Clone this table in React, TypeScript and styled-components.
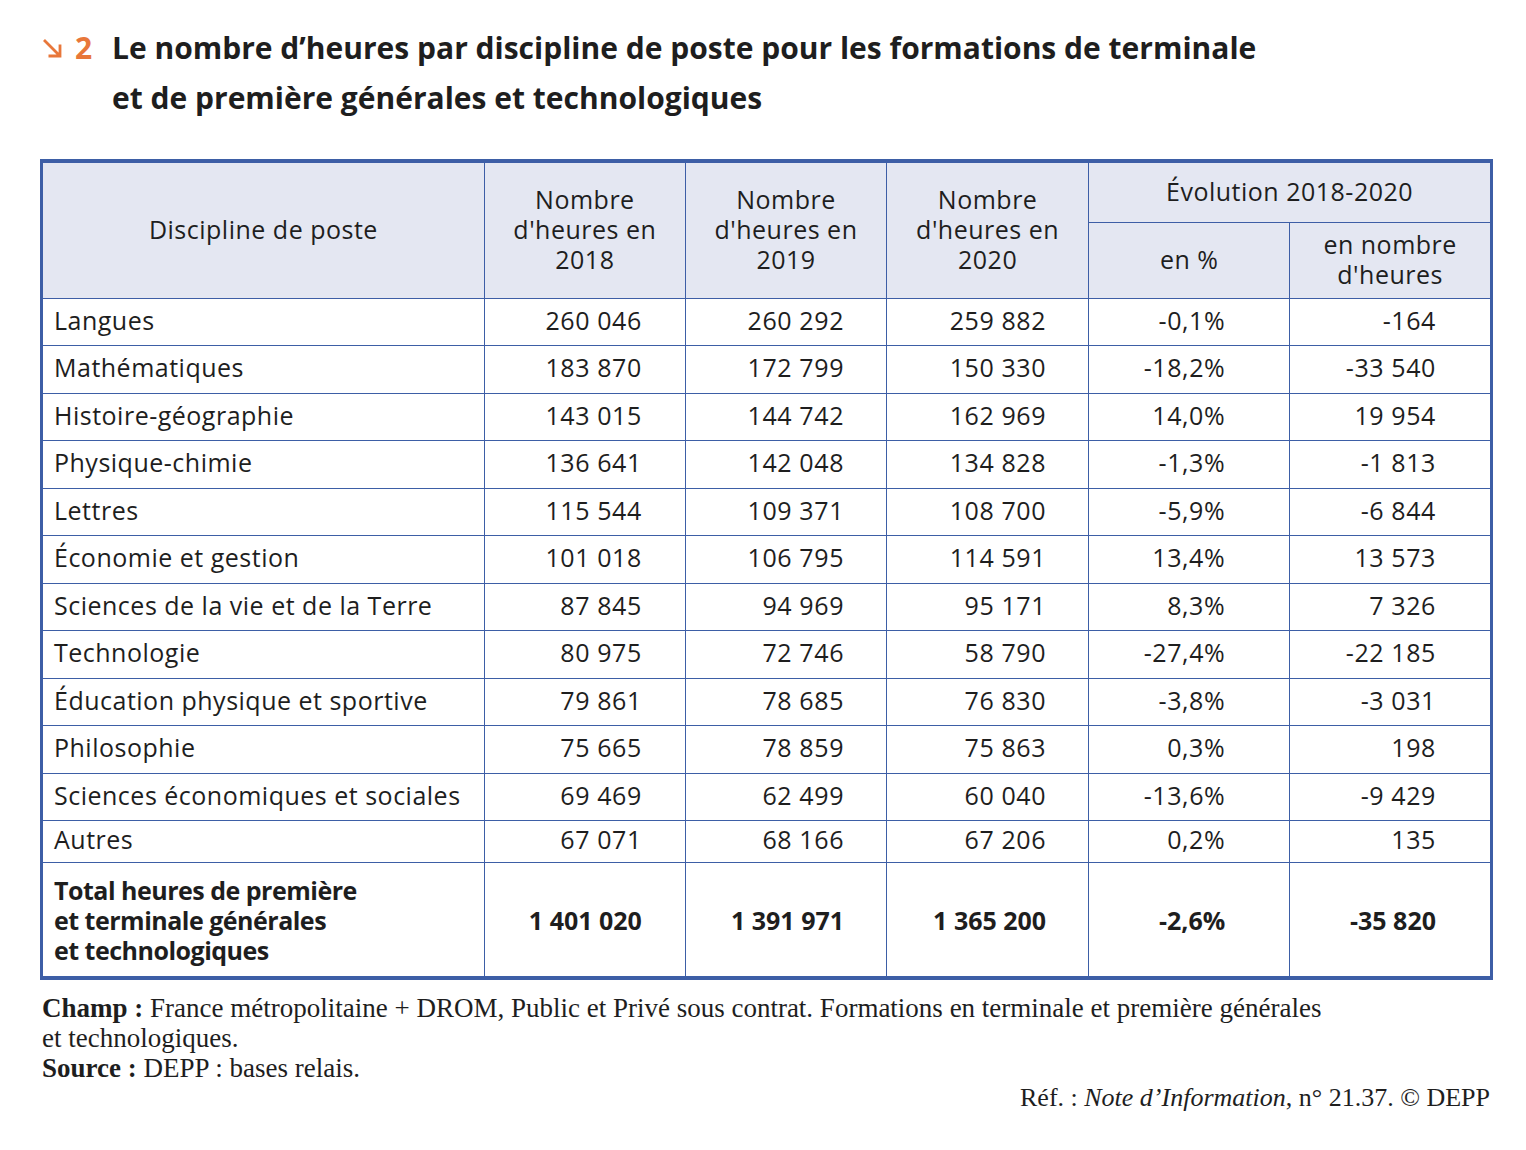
import React from "react";
import styled, { createGlobalStyle } from "styled-components";

const Global = createGlobalStyle`
  html, body { margin: 0; padding: 0; background: #ffffff; }
  body { font-family: "Open Sans", Lato, sans-serif; color: #1e1e1e; }
`;

const Page = styled.div`
  width: 1526px;
  padding: 23px 0 0 40px;
  box-sizing: border-box;
`;

const TitleRow = styled.div`
  display: flex;
  align-items: flex-start;
  width: 1400px;
`;

const Marker = styled.div`
  display: flex;
  align-items: center;
  gap: 12px;
  width: 70px;
  flex: none;
  color: #e8773a;
  font-weight: 700;
  font-size: 30px;
  line-height: 50px;
  padding-left: 2px;
`;

const Title = styled.h1`
  margin: 0;
  font-size: 30px;
  line-height: 50px;
  font-weight: 700;
  color: #1e1e1e;
`;

const TableFrame = styled.div`
  margin-top: 36px;
  width: 1453px;
  border: 3px solid #3d5ea6;
  box-sizing: border-box;
`;

const Table = styled.table`
  border-collapse: collapse;
  width: 100%;
  table-layout: fixed;
  font-size: 25px;
  letter-spacing: 0.5px;
`;

const HeadCell = styled.th<{ $h?: number }>`
  background: #e4e7f2;
  font-weight: 400;
  text-align: center;
  vertical-align: middle;
  line-height: 30px;
  padding: 0 6px 4px;
  border: 1px solid #3d5ea6;
  height: ${(p) => (p.$h ? `${p.$h}px` : "auto")};
  &:first-child { border-left: none; }
  &:last-child { border-right: none; }
`;

const Row = styled.tr<{ $h: number }>`
  height: ${(p) => p.$h}px;
`;

const NameCell = styled.td<{ $bold?: boolean }>`
  border: 1px solid #3d5ea6;
  border-left: none;
  padding: 0 0 ${(p) => (p.$bold ? 0 : 5)}px 11px;
  line-height: 30px;
  font-weight: ${(p) => (p.$bold ? 700 : 400)};
  letter-spacing: ${(p) => (p.$bold ? "-0.5px" : "0.5px")};
  vertical-align: middle;
  white-space: nowrap;
`;

const NumCell = styled.td<{ $pr: number; $bold?: boolean }>`
  border: 1px solid #3d5ea6;
  text-align: right;
  padding: 0 ${(p) => p.$pr}px ${(p) => (p.$bold ? 0 : 5)}px 0;
  font-weight: ${(p) => (p.$bold ? 700 : 400)};
  letter-spacing: ${(p) => (p.$bold ? "0px" : "0.6px")};
  vertical-align: middle;
  white-space: nowrap;
  &:last-child { border-right: none; }
`;

const Notes = styled.div`
  margin-top: 13px;
  width: 1453px;
  font-family: "Liberation Serif", serif;
  font-size: 27px;
  line-height: 30px;
  color: #1e1e1e;
`;

const NoteLine = styled.div`
  padding-left: 2px;
`;

const Ref = styled.div`
  text-align: right;
  padding-right: 3px;
  font-size: 26px;
`;

const rows: [string, string, string, string, string, string][] = [
  ["Langues", "260 046", "260 292", "259 882", "-0,1%", "-164"],
  ["Mathématiques", "183 870", "172 799", "150 330", "-18,2%", "-33 540"],
  ["Histoire-géographie", "143 015", "144 742", "162 969", "14,0%", "19 954"],
  ["Physique-chimie", "136 641", "142 048", "134 828", "-1,3%", "-1 813"],
  ["Lettres", "115 544", "109 371", "108 700", "-5,9%", "-6 844"],
  ["Économie et gestion", "101 018", "106 795", "114 591", "13,4%", "13 573"],
  ["Sciences de la vie et de la Terre", "87 845", "94 969", "95 171", "8,3%", "7 326"],
  ["Technologie", "80 975", "72 746", "58 790", "-27,4%", "-22 185"],
  ["Éducation physique et sportive", "79 861", "78 685", "76 830", "-3,8%", "-3 031"],
  ["Philosophie", "75 665", "78 859", "75 863", "0,3%", "198"],
  ["Sciences économiques et sociales", "69 469", "62 499", "60 040", "-13,6%", "-9 429"],
  ["Autres", "67 071", "68 166", "67 206", "0,2%", "135"],
];

const pads = [43, 42, 42, 64, 54];
const heights = [47, 48, 47, 48, 47, 48, 47, 48, 47, 48, 47, 42];

export default function App() {
  return (
    <>
      <Global />
      <Page>
        <TitleRow>
          <Marker>
            <svg width="21" height="21" viewBox="0 0 21 21">
              <path d="M2 2 L18 18 M6.5 18 H18 V6.5" stroke="#e8773a" strokeWidth="2.8" fill="none" />
            </svg>
            <span>2</span>
          </Marker>
          <Title>
            Le nombre d’heures par discipline de poste pour les formations de terminale
            <br />
            et de première générales et technologiques
          </Title>
        </TitleRow>

        <TableFrame>
          <Table>
            <colgroup>
              <col style={{ width: 441 }} />
              <col style={{ width: 201 }} />
              <col style={{ width: 201 }} />
              <col style={{ width: 202 }} />
              <col style={{ width: 201 }} />
              <col style={{ width: 200 }} />
            </colgroup>
            <thead>
              <tr>
                <HeadCell rowSpan={2}>Discipline de poste</HeadCell>
                <HeadCell rowSpan={2}>Nombre<br />d'heures en<br />2018</HeadCell>
                <HeadCell rowSpan={2}>Nombre<br />d'heures en<br />2019</HeadCell>
                <HeadCell rowSpan={2}>Nombre<br />d'heures en<br />2020</HeadCell>
                <HeadCell colSpan={2} $h={55}>Évolution 2018-2020</HeadCell>
              </tr>
              <tr>
                <HeadCell $h={71}>en %</HeadCell>
                <HeadCell $h={71}>en nombre<br />d'heures</HeadCell>
              </tr>
            </thead>
            <tbody>
              {rows.map((r, i) => (
                <Row key={r[0]} $h={heights[i]}>
                  <NameCell>{r[0]}</NameCell>
                  {r.slice(1).map((v, j) => (
                    <NumCell key={j} $pr={pads[j]}>{v}</NumCell>
                  ))}
                </Row>
              ))}
              <Row $h={114}>
                <NameCell $bold>
                  Total heures de première<br />et terminale générales<br />et technologiques
                </NameCell>
                {["1 401 020", "1 391 971", "1 365 200", "-2,6%", "-35 820"].map((v, j) => (
                  <NumCell key={j} $pr={pads[j]} $bold>{v}</NumCell>
                ))}
              </Row>
            </tbody>
          </Table>
        </TableFrame>

        <Notes>
          <NoteLine>
            <b>Champ :</b> France métropolitaine + DROM, Public et Privé sous contrat. Formations en terminale et première générales
            <br />
            et technologiques.
          </NoteLine>
          <NoteLine>
            <b>Source :</b> DEPP : bases relais.
          </NoteLine>
          <Ref>
            Réf. : <i>Note d’Information</i>, n° 21.37. © DEPP
          </Ref>
        </Notes>
      </Page>
    </>
  );
}
